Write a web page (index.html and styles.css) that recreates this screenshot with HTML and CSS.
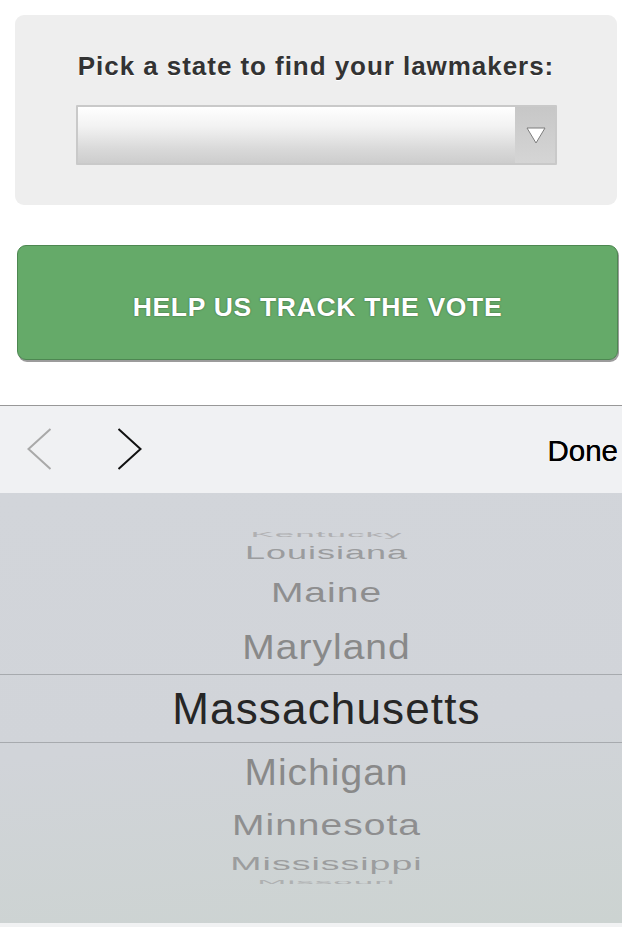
FILE: index.html
```html
<!DOCTYPE html>
<html lang="en">
<head>
<meta charset="utf-8">
<title>Find your lawmakers</title>
<link rel="stylesheet" href="styles.css">
</head>
<body>
<div class="page">
  <section class="panel">
    <h2 class="panel-title">Pick a state to find your lawmakers:</h2>
    <div class="select">
      <div class="select-field"></div>
      <div class="select-arrow">
        <svg width="20" height="17" viewBox="0 0 20 17"><polygon points="1,1 19,1 10,16" fill="#ffffff" stroke="#7d7d7d" stroke-width="1"/></svg>
      </div>
    </div>
  </section>

  <button class="track-btn">HELP US TRACK THE VOTE</button>

  <div class="toolbar">
    <span class="chev chev-prev">
      <svg width="25" height="42" viewBox="0 0 25 42"><polyline points="23.5,1 1.5,21 23.5,41" fill="none" stroke="#a9a9a9" stroke-width="2"/></svg>
    </span>
    <span class="chev chev-next">
      <svg width="25" height="42" viewBox="0 0 25 42"><polyline points="1.5,1 23.5,21 1.5,41" fill="none" stroke="#111111" stroke-width="2"/></svg>
    </span>
    <span class="done">Done</span>
  </div>

  <div class="picker">
    <div class="row r-kentucky"><span>Kentucky</span></div>
    <div class="row r-louisiana"><span>Louisiana</span></div>
    <div class="row r-maine"><span>Maine</span></div>
    <div class="row r-maryland"><span>Maryland</span></div>
    <div class="row r-selected"><span>Massachusetts</span></div>
    <div class="row r-michigan"><span>Michigan</span></div>
    <div class="row r-minnesota"><span>Minnesota</span></div>
    <div class="row r-mississippi"><span>Mississippi</span></div>
    <div class="row r-missouri"><span>Missouri</span></div>
  </div>
  <div class="picker-foot"></div>
</div>
</body>
</html>
```

FILE: styles.css
```css
* { box-sizing: border-box; }

html, body {
  margin: 0;
  padding: 0;
  background: #ffffff;
  font-family: "Liberation Sans", Arial, Helvetica, sans-serif;
}

.page {
  width: 622px;
  height: 927px;
  overflow: hidden;
  padding-top: 15px;
}

.panel {
  margin: 0 5px 0 15px;
  height: 190px;
  background: #eeeeee;
  border-radius: 9px;
  padding-top: 36px;
  display: flex;
  flex-direction: column;
  align-items: center;
}

.panel-title {
  margin: 0;
  font-size: 26px;
  line-height: 30px;
  font-weight: 700;
  letter-spacing: 0.95px;
  color: #333333;
  text-shadow: 0 1px 0 #ffffff;
}

.select {
  margin-top: 24px;
  width: 481px;
  height: 60px;
  display: flex;
  border: 2px solid #c9c9c9;
  border-radius: 1px;
}

.select-field {
  flex: 1;
  background: linear-gradient(#ffffff 0%, #f2f2f2 35%, #d9d9d9 75%, #cdcdcd 100%);
}

.select-arrow {
  width: 40px;
  background: linear-gradient(#c7c7c7, #d5d5d5);
  display: flex;
  align-items: center;
  justify-content: center;
  padding-left: 2px;
}

.track-btn {
  display: block;
  margin: 40px 4px 0 17px;
  width: 601px;
  height: 115px;
  background: #65aa69;
  border: 1px solid #4d8751;
  border-radius: 9px;
  box-shadow: 1px 2px 0 #9c9c9c;
  color: #ffffff;
  font-family: "Liberation Sans", Arial, Helvetica, sans-serif;
  font-weight: 700;
  font-size: 26.5px;
  line-height: 30px;
  letter-spacing: 0.7px;
  padding: 46px 0 37px;
  text-align: center;
  text-shadow: 0 0 2px rgba(0, 0, 0, 0.45);
}

.toolbar {
  margin-top: 45px;
  height: 88px;
  border-top: 1px solid #989898;
  background: #f0f1f3;
  display: flex;
  align-items: center;
  padding: 0 4px 2px 27px;
}

.chev {
  display: flex;
  height: 42px;
}

.chev-next {
  margin-left: 65px;
}

.done {
  margin-left: auto;
  font-size: 29.5px;
  color: #000000;
  padding-top: 4px;
  text-shadow: 0 0 0.4px #000000;
}

.picker {
  height: 430px;
  background: linear-gradient(175deg, #d2d5da 0%, #d1d4d9 55%, #ccd3d1 100%);
  padding-top: 35px;
  display: flex;
  flex-direction: column;
  overflow: hidden;
}

.picker-foot {
  height: 4px;
  background: #f1f2f3;
}

.row {
  display: flex;
  align-items: center;
  justify-content: center;
  flex: none;
  padding-left: 31px;
}

.row span {
  display: inline-block;
  line-height: 1;
  font-size: 39px;
  letter-spacing: 1px;
  color: #8b8b8b;
  white-space: nowrap;
}

.r-kentucky { height: 12px; }
.r-kentucky span { font-size: 35px; color: #b0b0b2; transform: scaleY(0.2); }

.r-louisiana { height: 26px; }
.r-louisiana span { font-size: 36px; color: #9b9c9e; transform: scaleY(0.52); }

.r-maine { height: 52px; }
.r-maine span { color: #8e8e8f; transform: scaleY(0.72); }

.r-maryland { height: 56px; }
.r-maryland span { color: #898989; transform: scaleY(0.9); }

.r-selected {
  height: 69px;
  border-top: 1px solid #a7aaae;
  border-bottom: 1px solid #a7aaae;
}
.r-selected span { font-size: 44px; letter-spacing: 1.15px; color: #262626; }

.r-michigan { height: 58px; }
.r-michigan span { color: #898989; transform: scaleY(0.93); }

.r-minnesota { height: 48px; }
.r-minnesota span { color: #8e8e8f; transform: scaleY(0.74); }

.r-mississippi { height: 30px; }
.r-mississippi span { font-size: 37.5px; color: #9c9d9e; transform: scaleY(0.5); }

.r-missouri { height: 6px; }
.r-missouri span { font-size: 35px; color: #aeb0b1; transform: scaleY(0.14); }
```
